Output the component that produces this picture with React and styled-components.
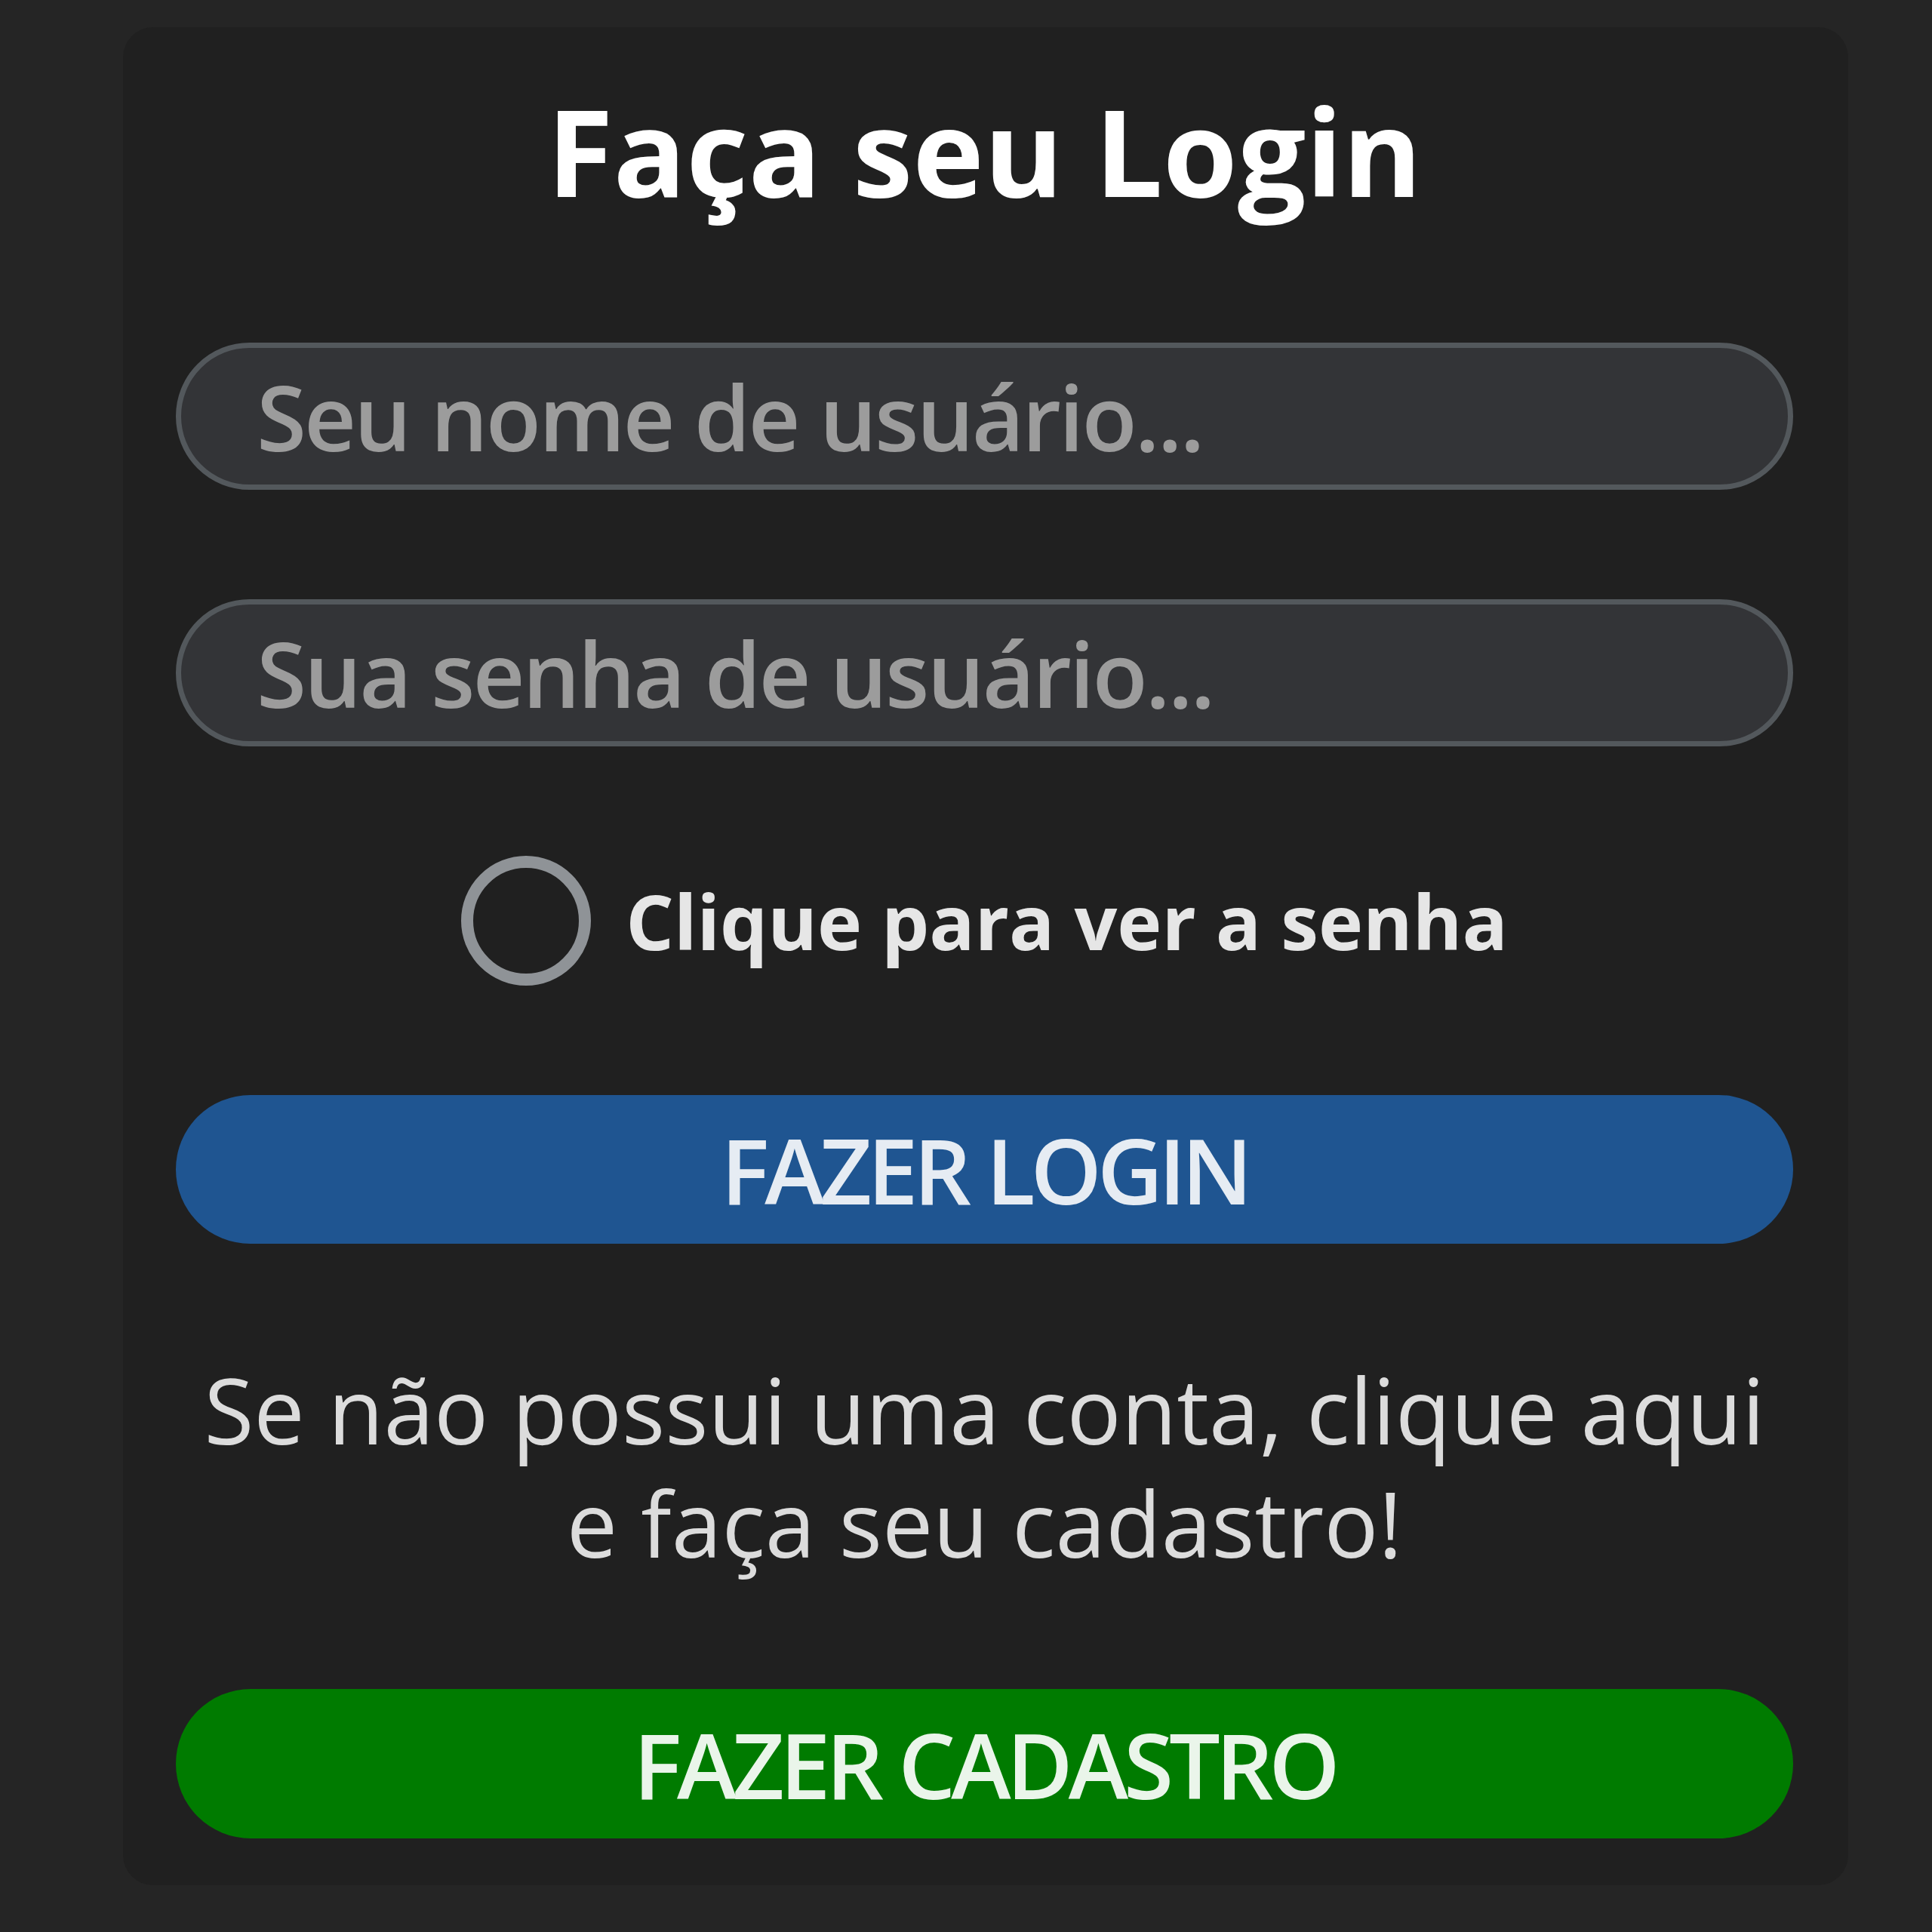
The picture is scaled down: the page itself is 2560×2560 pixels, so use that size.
import styled, { createGlobalStyle } from "styled-components";

const GlobalStyle = createGlobalStyle`
  html, body {
    margin: 0;
    padding: 0;
    background: #252525;
  }
  body {
    font-family: "Open Sans", "Liberation Sans", sans-serif;
  }
`;

const Page = styled.div`
  width: 2560px;
  height: 2560px;
  padding: 36px 0 0 163px;
  box-sizing: border-box;
`;

const Card = styled.form`
  width: 2286px;
  height: 2462px;
  box-sizing: border-box;
  padding: 83px 73px 62px 70px;
  background: #202020;
  border-radius: 40px;
  display: flex;
  flex-direction: column;
  align-items: stretch;
  gap: 145px;
`;

const Title = styled.h1`
  margin: 0 0 30px 0;
  font-size: 160px;
  line-height: 1;
  font-weight: 700;
  color: #ffffff;
  text-align: center;
`;

const Field = styled.input`
  height: 196px;
  box-sizing: border-box;
  border: 7px solid #53585c;
  border-radius: 100px;
  background: #333437;
  padding: 0 0 0 100px;
  font-family: inherit;
  font-size: 120px;
  font-weight: 600;
  letter-spacing: -3px;
  color: #e0e0e0;
  outline: none;

  &::placeholder {
    color: #9c9c9c;
  }
`;

const ToggleRow = styled.label`
  display: flex;
  align-items: center;
  justify-content: center;
  gap: 46px;
  height: 172px;
  cursor: pointer;
`;

const Radio = styled.input`
  appearance: none;
  margin: 0;
  width: 172px;
  height: 172px;
  box-sizing: border-box;
  border: 16px solid #8f9397;
  border-radius: 50%;
  background: transparent;
`;

const ToggleText = styled.span`
  font-size: 100px;
  font-weight: 700;
  color: #e6e6e6;
`;

const Button = styled.button`
  height: 199px;
  border: none;
  border-radius: 100px;
  background: ${(props) => props.bg};
  color: ${(props) => props.fg};
  font-family: inherit;
  font-size: 120px;
  font-weight: 600;
  letter-spacing: -6px;
  text-transform: uppercase;
  cursor: pointer;
`;

const Hint = styled.p`
  margin: 0;
  font-size: 120px;
  line-height: 150px;
  font-weight: 400;
  color: #dcdcdc;
  text-align: center;
`;

const App = () => {
  return (
    <>
      <GlobalStyle />
      <Page>
        <Card onSubmit={(e) => e.preventDefault()}>
          <Title>Faça seu Login</Title>
          <Field type="text" placeholder="Seu nome de usuário..." />
          <Field type="password" placeholder="Sua senha de usuário..." />
          <ToggleRow>
            <Radio type="checkbox" />
            <ToggleText>Clique para ver a senha</ToggleText>
          </ToggleRow>
          <Button bg="#1f5591" fg="#e6ecf3">Fazer Login</Button>
          <Hint>
            Se não possui uma conta, clique aqui
            <br />e faça seu cadastro!
          </Hint>
          <Button bg="#007b00" fg="#eaf5ea">Fazer Cadastro</Button>
        </Card>
      </Page>
    </>
  );
};

export default App;
